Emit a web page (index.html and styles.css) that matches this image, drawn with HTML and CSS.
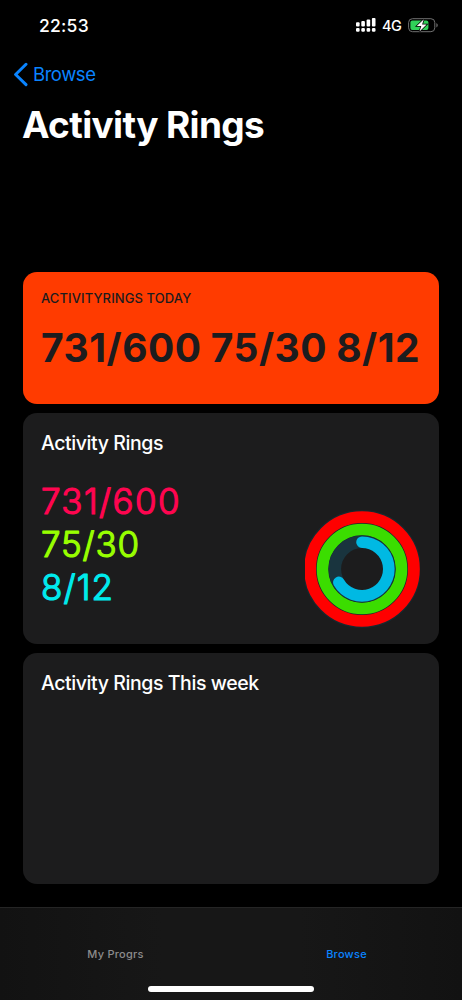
FILE: index.html
```html
<!DOCTYPE html>
<html lang="en">
<head>
<meta charset="utf-8">
<title>Activity Rings</title>
<link rel="stylesheet" href="styles.css">
</head>
<body>
<div class="screen">
  <header class="status">
    <span class="time">22:53</span>
    <div class="indicators">
      <svg class="signal" width="20" height="14" viewBox="0 0 20 14" fill="#fff">
        <rect x="0" y="4.2" width="3.6" height="4.2" rx="1"/><rect x="5.3" y="3" width="3.6" height="5.4" rx="1"/><rect x="10.6" y="1.6" width="3.6" height="6.8" rx="1"/><rect x="15.9" y="0" width="3.6" height="8.4" rx="1"/>
        <rect x="0" y="9.9" width="3.6" height="3.8" rx="1.2"/><rect x="5.3" y="9.9" width="3.6" height="3.8" rx="1.2"/><rect x="10.6" y="9.9" width="3.6" height="3.8" rx="1.2"/><rect x="15.9" y="9.9" width="3.6" height="3.8" rx="1.2"/>
      </svg>
      <span class="network">4G</span>
      <svg class="battery" width="31" height="15" viewBox="0 0 31 15">
        <rect x=".6" y=".7" width="26.2" height="13" rx="3.9" fill="none" stroke="#717171" stroke-width="1"/>
        <path d="M28.4 5v4.5c1.8-.7 1.8-3.8 0-4.5z" fill="#717171"/>
        <rect x="2.4" y="2.4" width="18" height="9.6" rx="2" fill="#30d158"/>
        <path d="M15.800 1.200 8.800 8h4.500l-1.800 5.500L18.600 6.600h-4.500z" fill="#fff" stroke="#000" stroke-width="1.500" paint-order="stroke"/>
      </svg>
    </div>
  </header>
  <nav class="back">
    <svg width="15" height="25" viewBox="0 0 15 25" fill="none" stroke="#0a84ff" stroke-width="3" stroke-linecap="round" stroke-linejoin="round"><path d="M13 2.300 2.600 12.500 13 22.600"/></svg>
    <span>Browse</span>
  </nav>
  <h1 class="title">Activity Rings</h1>
  <main class="cards">
    <section class="card today">
      <div class="label">ACTIVITYRINGS TODAY</div>
      <div class="totals">731/600 75/30 8/12</div>
    </section>
    <section class="card activity">
      <h2 class="heading">Activity Rings</h2>
      <div class="summary">
        <svg class="values" width="160" height="130" viewBox="0 0 160 130">
          <text class="move" x="0" y="33" textLength="138.500">731/600</text>
          <text class="exercise" x="0" y="76" textLength="98">75/30</text>
          <text class="stand" x="0" y="118.600" textLength="72">8/12</text>
        </svg>
        <svg class="rings" width="115" height="118" viewBox="0 0 115 118" fill="none">
          <circle cx="57" cy="59" r="46" stroke="#17282e" stroke-width="26"/>
          <circle cx="57" cy="59" r="51.900" stroke="#f00" stroke-width="11.800"/>
          <circle cx="57" cy="59" r="39.500" stroke="#3bdd00" stroke-width="11.600"/>
          <circle cx="57" cy="59" r="27.200" stroke="#19343e" stroke-width="12.600"/>
          <path d="M57 32.200A26.800 26.800 0 1 1 33.800 72.400" stroke="#00b9e3" stroke-width="11.600" stroke-linecap="round"/>
        </svg>
      </div>
    </section>
    <section class="card week">
      <h2 class="heading">Activity Rings This week</h2>
    </section>
  </main>
  <footer class="tabbar">
    <div class="tabs">
      <span class="tab">My Progrs</span>
      <span class="tab active">Browse</span>
    </div>
    <div class="home"></div>
  </footer>
</div>
</body>
</html>
```

FILE: styles.css
```css
* { box-sizing: border-box; }
body { margin: 0; background: #000; font-family: Inter, "Liberation Sans", sans-serif; color: #fff; }
h1, h2 { margin: 0; }
svg { display: block; flex: none; }
.screen { width: 462px; height: 1000px; display: flex; flex-direction: column; overflow: hidden; white-space: nowrap; }
.status { height: 50px; padding: 0 23px 0 39px; display: flex; justify-content: space-between; align-items: center; }
.time { font-size: 17.500px; font-weight: 500; letter-spacing: .25px; line-height: 51px; }
.indicators { display: flex; align-items: center; }
.network { width: 20px; margin: 2px 6px 0 6px; font-size: 14.500px; line-height: 20px; font-weight: 450; letter-spacing: -.4px; }
.back { height: 48px; padding-left: 13px; display: flex; align-items: center; gap: 5px; color: #0a84ff; font-size: 18.500px; letter-spacing: -.45px; }
.title { height: 56px; padding-left: 22px; font-size: 37px; line-height: 54px; font-weight: 700; letter-spacing: -.65px; }
.cards { padding: 118px 23px 0; height: 753px; display: flex; flex-direction: column; gap: 9px; }
.card { background: #1c1c1d; border-radius: 14px; padding: 18px 18px 0; }
.today { height: 132px; background: #ff3b00; color: #1c1c1e; }
.label { font-size: 13px; line-height: 16px; font-weight: 450; letter-spacing: .1px; }
.totals { margin-top: 17px; font-size: 39px; line-height: 50px; font-weight: 650; letter-spacing: .5px; word-spacing: -.6px; }
.activity { height: 231px; }
.week { height: 231px; }
.heading { font-size: 19.500px; line-height: 24px; font-weight: 450; letter-spacing: -.42px; }
.summary { display: flex; justify-content: space-between; margin-top: 26px; }
.values { overflow: visible; font-size: 35px; font-weight: 350; stroke-width: 1.200px; stroke-linejoin: round; }
.move { fill: #ff0550; stroke: #ff0550; }
.exercise { fill: #98ff00; stroke: #98ff00; }
.stand { fill: #00eaed; stroke: #00eaed; }
.rings { margin: 29px 1px 0 0; }
.tabbar { height: 93px; border-top: 1px solid #252525; background: linear-gradient(90deg, #121212, #171717 35%, #171717 65%, #121212); display: flex; flex-direction: column; align-items: center; }
.tabs { width: 100%; height: 78px; display: grid; grid-template-columns: 1fr 1fr; padding-top: 39px; }
.tab { text-align: center; font-size: 11px; line-height: 14px; color: #8c8c8c; font-weight: 450; letter-spacing: .25px; }
.active { color: #0a84ff; font-weight: 500; }
.home { width: 166px; height: 6px; border-radius: 3px; background: #fff; }
```
